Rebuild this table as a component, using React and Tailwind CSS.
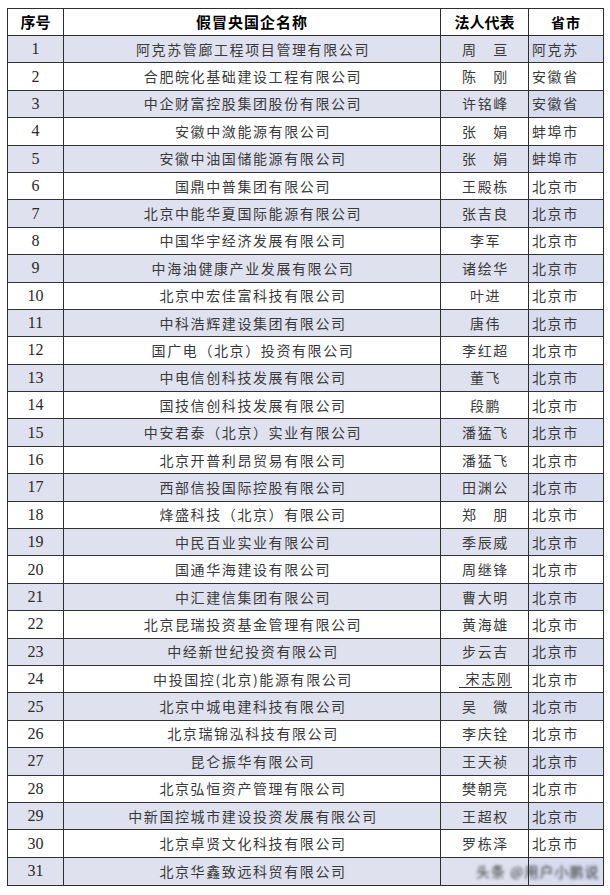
import React from "react";

const rows = [
  ["阿克苏管廊工程项目管理有限公司", "周　亘", "阿克苏"],
  ["合肥皖化基础建设工程有限公司", "陈　刚", "安徽省"],
  ["中企财富控股集团股份有限公司", "许铭峰", "安徽省"],
  ["安徽中潋能源有限公司", "张　娟", "蚌埠市"],
  ["安徽中油国储能源有限公司", "张　娟", "蚌埠市"],
  ["国鼎中普集团有限公司", "王殿栋", "北京市"],
  ["北京中能华夏国际能源有限公司", "张吉良", "北京市"],
  ["中国华宇经济发展有限公司", "李军", "北京市"],
  ["中海油健康产业发展有限公司", "诸绘华", "北京市"],
  ["北京中宏佳富科技有限公司", "叶进", "北京市"],
  ["中科浩辉建设集团有限公司", "唐伟", "北京市"],
  ["国广电（北京）投资有限公司", "李红超", "北京市"],
  ["中电信创科技发展有限公司", "董飞", "北京市"],
  ["国技信创科技发展有限公司", "段鹏", "北京市"],
  ["中安君泰（北京）实业有限公司", "潘猛飞", "北京市"],
  ["北京开普利昂贸易有限公司", "潘猛飞", "北京市"],
  ["西部信投国际控股有限公司", "田渊公", "北京市"],
  ["烽盛科技（北京）有限公司", "郑　朋", "北京市"],
  ["中民百业实业有限公司", "季辰威", "北京市"],
  ["国通华海建设有限公司", "周继锋", "北京市"],
  ["中汇建信集团有限公司", "曹大明", "北京市"],
  ["北京昆瑞投资基金管理有限公司", "黄海雄", "北京市"],
  ["中经新世纪投资有限公司", "步云吉", "北京市"],
  ["中投国控(北京)能源有限公司", "宋志刚", "北京市"],
  ["北京中城电建科技有限公司", "吴　微", "北京市"],
  ["北京瑞锦泓科技有限公司", "李庆铨", "北京市"],
  ["昆仑振华有限公司", "王天祯", "北京市"],
  ["北京弘恒资产管理有限公司", "樊朝亮", "北京市"],
  ["中新国控城市建设投资发展有限公司", "王超权", "北京市"],
  ["北京卓贤文化科技有限公司", "罗栋泽", "北京市"],
  ["北京华鑫致远科贸有限公司", "", ""],
];

const cjk = "font-['Noto_Sans_CJK_SC',sans-serif]";

export default function App() {
  return (
    <div className="w-[610px] h-[895px] bg-white pt-[8px] pl-[7px]">
      <div className="w-[597px] border border-[#2e2e2e] text-[#3a3a3a]">
        {/* header */}
        <div className="grid grid-cols-[56px_377px_88px_74px] h-[27px] border-b border-[#2e2e2e] bg-white">
          <div className={`flex items-center justify-center border-r border-[#2e2e2e] text-[15px] font-bold text-black ${cjk}`}>序号</div>
          <div className={`flex items-center justify-center border-r border-[#2e2e2e] text-[15px] font-bold text-black tracking-[1px] ${cjk}`}>假冒央国企名称</div>
          <div className={`flex items-center justify-center border-r border-[#2e2e2e] text-[15px] font-bold text-black ${cjk}`}>法人代表</div>
          <div className={`flex items-center justify-center text-[14px] font-bold text-black tracking-[1px] ${cjk}`}>省市</div>
        </div>
        {rows.map((r, i) => {
          const odd = i % 2 === 0;
          const last = i === rows.length - 1;
          return (
            <div
              key={i}
              className={`relative grid grid-cols-[56px_377px_88px_74px] h-[27.4px] ${last ? "" : "border-b border-[#333333]"} ${odd ? "bg-[#dfe1ee]" : "bg-white"}`}
            >
              <div className="flex items-center justify-center border-r border-[#2e2e2e] text-[16px] font-['Liberation_Serif',serif] text-[#2a2a2a]">
                {i + 1}
              </div>
              <div className={`flex items-center justify-center border-r border-[#2e2e2e] text-[14px] tracking-[1.6px] pl-[2px] ${cjk}`}>
                {r[0]}
              </div>
              <div className={`flex items-center justify-center border-r border-[#2e2e2e] text-[14px] tracking-[1.6px] pl-[2px] ${cjk}`}>
                {i === 23 ? (
                  <span className="border-b border-[#333] pl-[7px] leading-[17px]">{r[1]}</span>
                ) : (
                  r[1]
                )}
              </div>
              <div className={`flex items-center pl-[3px] text-[14px] tracking-[1.6px] ${odd ? "bg-[#d8dcef]" : "bg-white"} ${cjk}`}>
                {r[2]}
              </div>
              {last && (
                <span className={`absolute left-[468px] top-[4px] whitespace-nowrap text-[14px] leading-[18px] text-[#333] blur-[1.4px] tracking-[1px] ${cjk}`}>
                  头条 @用户小鹏说
                </span>
              )}
            </div>
          );
        })}
      </div>
    </div>
  );
}
